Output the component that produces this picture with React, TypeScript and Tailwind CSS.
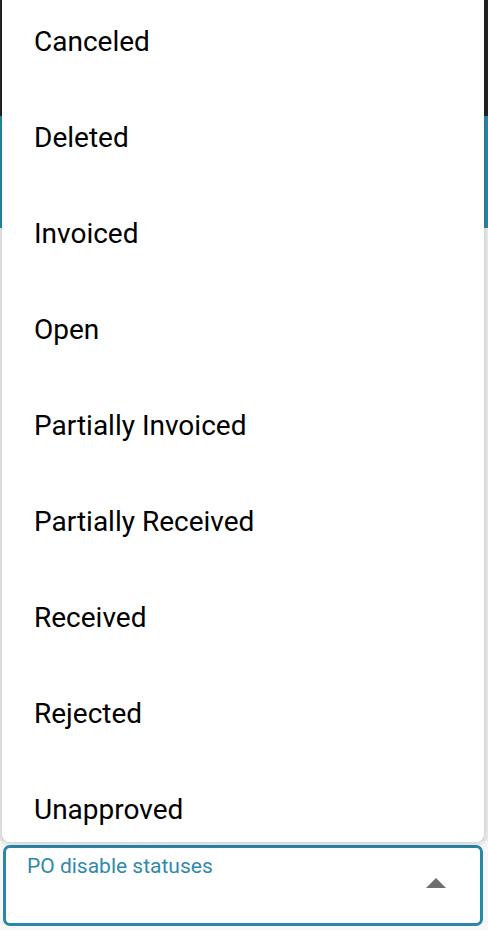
import React from 'react';

const statuses = [
  'Canceled',
  'Deleted',
  'Invoiced',
  'Open',
  'Partially Invoiced',
  'Partially Received',
  'Received',
  'Rejected',
  'Unapproved',
];

export default function App() {
  return (
    <div
      className="relative w-[488px] h-[930px] overflow-hidden bg-[#ececec]"
      style={{ fontFamily: 'Roboto, "Liberation Sans", sans-serif' }}
    >
      {/* page behind the menu */}
      <div className="flex flex-col h-full">
        <div className="h-[116px] bg-[#232323]" />
        <div className="h-[112px] bg-[#2986a8]" />
        <div className="flex-1 flex flex-col justify-end bg-[#ececec]">
          <div className="bg-[#f7f7f7] pl-[3px] pt-[4px] pb-[4px]">
            <div className="relative h-[81px] w-[480px] rounded-[7px] border-[3px] border-[#2986a8] bg-white">
              <span className="absolute left-[21px] top-[6px] text-[21px] leading-[24px] text-[#2f8aab]">
                PO disable statuses
              </span>
              <svg
                className="absolute left-[420px] top-[30px]"
                width="20"
                height="10"
                viewBox="0 0 20 10"
              >
                <path d="M0 10 L10 0 L20 10 Z" fill="#6e6e6e" />
              </svg>
            </div>
          </div>
        </div>
      </div>

      {/* open dropdown */}
      <div className="absolute left-[2px] top-0 w-[482px] h-[842px] overflow-hidden rounded-b-[8px] bg-white shadow-[0_2px_6px_rgba(0,0,0,0.18)]">
        <ul className="-mt-[6px]">
          {statuses.map((s) => (
            <li key={s} className="h-[96px] flex items-center pl-[32px] text-[28px] text-black">
              {s}
            </li>
          ))}
        </ul>
      </div>
    </div>
  );
}
